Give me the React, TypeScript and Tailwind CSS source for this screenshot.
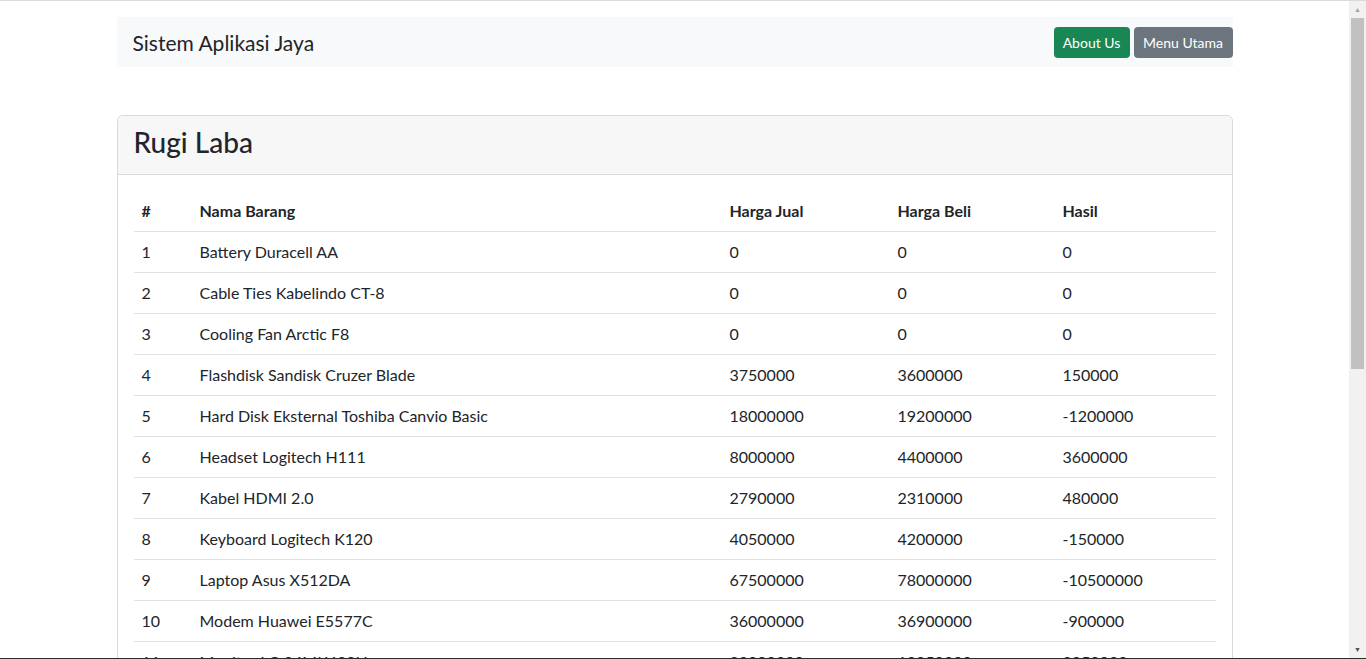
import React from 'react';

const rows = [
  { id: 1, nama: 'Battery Duracell AA', jual: 0, beli: 0 },
  { id: 2, nama: 'Cable Ties Kabelindo CT-8', jual: 0, beli: 0 },
  { id: 3, nama: 'Cooling Fan Arctic F8', jual: 0, beli: 0 },
  { id: 4, nama: 'Flashdisk Sandisk Cruzer Blade', jual: 3750000, beli: 3600000 },
  { id: 5, nama: 'Hard Disk Eksternal Toshiba Canvio Basic', jual: 18000000, beli: 19200000 },
  { id: 6, nama: 'Headset Logitech H111', jual: 8000000, beli: 4400000 },
  { id: 7, nama: 'Kabel HDMI 2.0', jual: 2790000, beli: 2310000 },
  { id: 8, nama: 'Keyboard Logitech K120', jual: 4050000, beli: 4200000 },
  { id: 9, nama: 'Laptop Asus X512DA', jual: 67500000, beli: 78000000 },
  { id: 10, nama: 'Modem Huawei E5577C', jual: 36000000, beli: 36900000 },
  { id: 11, nama: 'Monitor LG 24MK430H', jual: 22000000, beli: 19950000 },
  { id: 12, nama: 'Mouse Logitech M170', jual: 1500000, beli: 1200000 },
];

const App = () => {
  return (
    <div
      className="h-[659px] flex flex-col bg-white text-[#212529]"
      style={{ fontFamily: '"Segoe UI", Lato, "Liberation Sans", Arial, sans-serif' }}
    >
      <div className="h-px bg-[#dadada] shrink-0" />
      <div className="flex flex-1 min-h-0">
        <div className="flex-1 overflow-hidden">
          <div className="w-[1116px] mx-auto pt-4">
            <nav className="h-[50px] bg-[#f8f9fa] flex items-center justify-between pl-4">
              <span className="text-[21px] leading-[30px] pt-[1px]">Sistem Aplikasi Jaya</span>
              <div className="flex gap-1">
                <button className="w-[76px] h-[31px] text-[14px] text-white bg-[#198754] rounded">About Us</button>
                <button className="w-[99px] h-[31px] text-[14px] text-white bg-[#6c757d] rounded">Menu Utama</button>
              </div>
            </nav>

            <div className="mt-12 border border-[#d9d9d9] rounded-md">
              <div className="h-[59px] bg-[#f7f7f7] border-b border-[#d9d9d9] rounded-t-md px-4 pt-[6px]">
                <h3 className="text-[28px] leading-[40px] font-medium">Rugi Laba</h3>
              </div>
              <div className="px-4 pt-[15px] pb-4">
                <table className="w-full table-fixed border-collapse text-[16px]">
                  <colgroup>
                    <col className="w-[58px]" />
                    <col className="w-[530px]" />
                    <col className="w-[168px]" />
                    <col className="w-[165px]" />
                    <col />
                  </colgroup>
                  <thead>
                    <tr className="border-b border-[#dee2e6] h-[41px]">
                      <th className="text-left font-bold px-2 pt-[2px]">#</th>
                      <th className="text-left font-bold px-2 pt-[2px]">Nama Barang</th>
                      <th className="text-left font-bold px-2 pt-[2px]">Harga Jual</th>
                      <th className="text-left font-bold px-2 pt-[2px]">Harga Beli</th>
                      <th className="text-left font-bold px-2 pt-[2px]">Hasil</th>
                    </tr>
                  </thead>
                  <tbody>
                    {rows.map((r) => (
                      <tr key={r.id} className="border-b border-[#dee2e6] h-[41px]">
                        <td className="px-2 pt-[1px]">{r.id}</td>
                        <td className="px-2 pt-[1px]">{r.nama}</td>
                        <td className="px-2 pt-[1px]">{r.jual}</td>
                        <td className="px-2 pt-[1px]">{r.beli}</td>
                        <td className="px-2 pt-[1px]">{r.jual - r.beli}</td>
                      </tr>
                    ))}
                  </tbody>
                </table>
              </div>
            </div>
          </div>
        </div>
        {/* browser scrollbar */}
        <div className="w-[17px] shrink-0 bg-[#f1f1f1] flex flex-col items-center">
          <div className="h-[17px] flex items-center justify-center text-[7px] text-[#a3a3a3]">▲</div>
          <div className="w-[13px] h-[351px] bg-[#c1c1c1]" />
          <div className="flex-1" />
          <div className="h-[17px] flex items-center justify-center text-[7px] text-[#505050]">▼</div>
        </div>
      </div>
      <div className="h-px bg-[#2b2b2b] shrink-0" />
    </div>
  );
};

export default App;
